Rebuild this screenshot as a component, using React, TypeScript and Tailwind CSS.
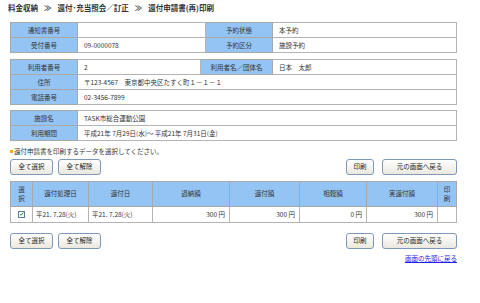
const font = { fontFamily: '"Noto Sans CJK JP", "Noto Sans", sans-serif' };

const label = "border border-[#a8a8a8] bg-[#93c4f3] text-center font-normal text-[#333]";
const value = "border border-[#b4b4b4] bg-white px-[6px] text-left text-[#333]";

function Btn({ children, className = "" }: { children: React.ReactNode; className?: string }) {
  return (
    <button
      type="button"
      className={`h-[16px] rounded-[3px] border border-[#7d98b8] bg-gradient-to-b from-white to-[#ebe8df] text-[6.5px] text-[#222] ${className}`}
    >
      {children}
    </button>
  );
}

function ButtonRow() {
  return (
    <div className="flex items-center justify-between">
      <div className="flex gap-[5px]">
        <Btn className="w-[43px]">全て選択</Btn>
        <Btn className="w-[43px]">全て解除</Btn>
      </div>
      <div className="flex gap-[8px]">
        <Btn className="w-[28px]">印刷</Btn>
        <Btn className="w-[75px]">元の画面へ戻る</Btn>
      </div>
    </div>
  );
}

function Check() {
  return (
    <span className="inline-flex h-[7px] w-[7px] items-center justify-center border border-[#5a7a9a] bg-white">
      <svg viewBox="0 0 8 8" className="h-[6px] w-[6px]">
        <path d="M1.2 4.2 L3.2 6 L6.8 1.8" fill="none" stroke="#1a9a2a" strokeWidth="1.6" />
      </svg>
    </span>
  );
}

export default function App() {
  const rows = "h-[15px]";
  const cell = "border border-[#b4b4b4]";
  return (
    <div className="min-h-screen w-[480px] bg-white text-[6.5px] leading-none text-[#333]" style={font}>
      <div className="flex h-[15px] items-center gap-[6px] pl-[8px] pt-[1px] text-[7.5px] font-bold text-[#333]">
        <span>料金収納</span>
        <span>≫</span>
        <span>還付･充当照会／訂正</span>
        <span>≫</span>
        <span>還付申請書(再)印刷</span>
      </div>

      <div className="ml-[10px] w-[447px] pt-[7px]">
        <table className="w-full table-fixed border-collapse">
          <colgroup>
            <col className="w-[67px]" />
            <col className="w-[128px]" />
            <col className="w-[67px]" />
            <col />
          </colgroup>
          <tbody>
            <tr className={rows}>
              <th className={label}>通知書番号</th>
              <td className={value}></td>
              <th className={label}>予約状態</th>
              <td className={value}>本予約</td>
            </tr>
            <tr className={rows}>
              <th className={label}>受付番号</th>
              <td className={value}>09-0000078</td>
              <th className={label}>予約区分</th>
              <td className={value}>施設予約</td>
            </tr>
          </tbody>
        </table>

        <table className="mt-[6px] w-full table-fixed border-collapse">
          <colgroup>
            <col className="w-[67px]" />
            <col className="w-[123px]" />
            <col className="w-[72px]" />
            <col />
          </colgroup>
          <tbody>
            <tr className={rows}>
              <th className={label}>利用者番号</th>
              <td className={value}>2</td>
              <th className={label}>利用者名／団体名</th>
              <td className={value}>日本　太郎</td>
            </tr>
            <tr className={rows}>
              <th className={label}>住所</th>
              <td className={value} colSpan={3}>〒123-4567　東京都中央区たすく町１－１－１</td>
            </tr>
            <tr className={rows}>
              <th className={label}>電話番号</th>
              <td className={value} colSpan={3}>02-3456-7899</td>
            </tr>
          </tbody>
        </table>

        <table className="mt-[5px] w-full table-fixed border-collapse">
          <colgroup>
            <col className="w-[67px]" />
            <col />
          </colgroup>
          <tbody>
            <tr className={rows}>
              <th className={label}>施設名</th>
              <td className={value}>TASK市総合運動公園</td>
            </tr>
            <tr className={rows}>
              <th className={label}>利用期間</th>
              <td className={value}>平成21年 7月29日(水)～ 平成21年 7月31日(金)</td>
            </tr>
          </tbody>
        </table>

        <p className="mt-[7px] flex items-center gap-[1px] text-[6.5px]">
          <span className="inline-block h-[3px] w-[3px] bg-[#f5a623]" />
          還付申請書を印刷するデータを選択してください。
        </p>

        <div className="mt-[4px]">
          <ButtonRow />
        </div>

        <table className="mt-[6px] w-full table-fixed border-collapse">
          <colgroup>
            <col className="w-[22px]" />
            <col className="w-[56px]" />
            <col className="w-[64px]" />
            <col className="w-[77px]" />
            <col className="w-[70px]" />
            <col className="w-[67px]" />
            <col className="w-[71px]" />
            <col />
          </colgroup>
          <thead>
            <tr className="h-[25px]">
              <th className={`${label} leading-[1.35]`}>選<br />択</th>
              <th className={label}>還付処理日</th>
              <th className={label}>還付日</th>
              <th className={label}>過納額</th>
              <th className={label}>還付額</th>
              <th className={label}>相殺額</th>
              <th className={label}>実還付額</th>
              <th className={`${label} leading-[1.35]`}>印<br />刷</th>
            </tr>
          </thead>
          <tbody>
            <tr className="h-[16px]">
              <td className={`${cell} text-center`}><Check /></td>
              <td className={`${cell} px-[3px]`}>平21. 7.28(火)</td>
              <td className={`${cell} px-[3px]`}>平21. 7.28(火)</td>
              <td className={`${cell} px-[4px] text-right`}>300 円</td>
              <td className={`${cell} px-[4px] text-right`}>300 円</td>
              <td className={`${cell} px-[4px] text-right`}>0 円</td>
              <td className={`${cell} px-[4px] text-right`}>300 円</td>
              <td className={cell}></td>
            </tr>
          </tbody>
        </table>

        <div className="mt-[10px]">
          <ButtonRow />
        </div>

        <div className="mt-[6px] text-right">
          <a href="#" className="text-[6.5px] text-[#2020ee] underline">画面の先頭に戻る</a>
        </div>
      </div>
    </div>
  );
}
